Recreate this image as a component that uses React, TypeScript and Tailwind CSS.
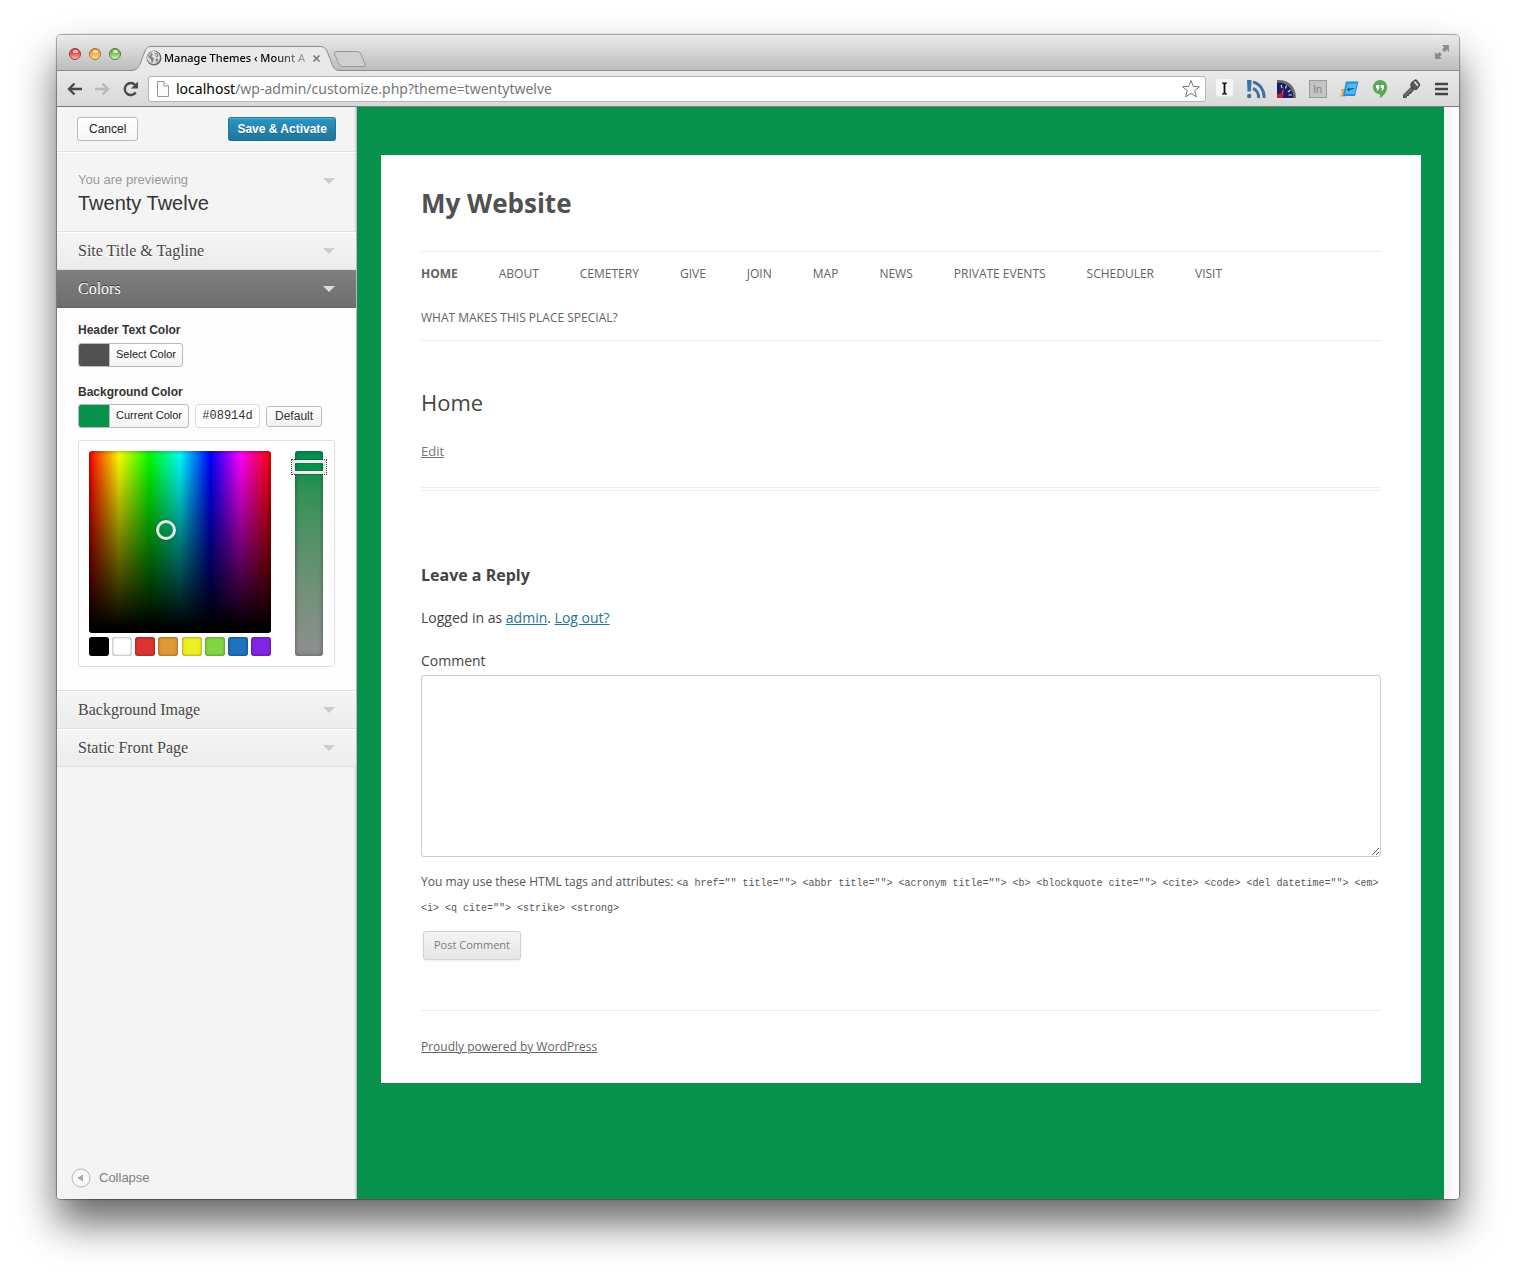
import { useState, type ReactNode } from 'react';

const NAV = ['About', 'Cemetery', 'Give', 'Join', 'Map', 'News', 'Private Events', 'Scheduler', 'Visit', 'What makes this place special?'];

const SWATCHES = [
  { name: 'Black', cls: 'bg-black' },
  { name: 'White', cls: 'bg-white' },
  { name: 'Red', cls: 'bg-[#dd3333]' },
  { name: 'Orange', cls: 'bg-[#dd9933]' },
  { name: 'Yellow', cls: 'bg-[#eeee22]' },
  { name: 'Green', cls: 'bg-[#81d742]' },
  { name: 'Blue', cls: 'bg-[#1e73be]' },
  { name: 'Purple', cls: 'bg-[#8224e3]' },
];

const TAGS =
  '<a href="" title=""> <abbr title=""> <acronym title=""> <b> <blockquote cite=""> <cite> <code> <del datetime=""> <em> <i> <q cite=""> <strike> <strong>';

function Arrow({ light = false }: { light?: boolean }) {
  return (
    <svg width="12" height="6" viewBox="0 0 12 6" aria-hidden="true" className={light ? 'fill-[#dddddd]' : 'fill-[#cccccc]'}>
      <path d="M0 0H12L6 6Z" />
    </svg>
  );
}

function Lights() {
  const lights = [
    { name: 'Close', cls: 'border-[#9c3a38] from-[#c8393b] via-[#ee5a58] to-[#ffb3ae]' },
    { name: 'Minimize', cls: 'border-[#a5702c] from-[#d98c2b] via-[#f6b342] to-[#ffe69b]' },
    { name: 'Zoom', cls: 'border-[#51803a] from-[#5da145] via-[#83c860] to-[#d5f7b4]' },
  ];
  return (
    <div className="flex gap-2 pt-[13px]">
      {lights.map((l) => (
        <button key={l.name} aria-label={l.name} className={`flex size-3 justify-center rounded-full border bg-linear-to-b ${l.cls}`}>
          <span className="mt-px h-[3px] w-[5px] rounded-full bg-white/70" />
        </button>
      ))}
    </div>
  );
}

function TabStrip() {
  return (
    <div className="flex h-9 shrink-0 items-start rounded-t-[4px] border-b border-[#8d8d8d] bg-linear-to-b from-[#ebebeb] to-[#bdbdbd] pl-3">
      <Lights />
      <div className="relative ml-[10px] mt-[10px] h-[26px] w-[208px]">
        <svg viewBox="0 0 208 26" width="208" height="26" className="absolute inset-0" aria-hidden="true">
          <path d="M0 26C6 25 7 23 9 19L14 6C16 2 17 1.500 20 1.500H189C193 1.500 194 3 196 6L201 19C203 24 204 25 208 26Z" fill="#e9e9e9" />
          <path d="M0 25.500C6 25 7 23 9 19L14 6C16 2 17 1.500 20 1.500H189C193 1.500 194 3 196 6L201 19C203 24 204 25 208 25.500" fill="none" stroke="#8d8d8d" />
        </svg>
        <div className="relative flex h-full items-center pl-[15px]">
          <svg width="16" height="16" viewBox="0 0 16 16" aria-hidden="true">
            <circle cx="8" cy="8" r="7.500" fill="#6b6b6b" />
            <circle cx="7.500" cy="7.500" r="6.500" fill="#dedede" />
            <path d="M2.500 4.500C4 2 6.500 2.500 6.500 4.500S5 6 6 7 8.500 8 7.500 10 7 13.500 6 13 5.500 9.500 4 8.500 2 6 2.500 4.500Z" fill="#858585" />
            <path d="M9 3C11.500 2.500 13 5 12 6.500S9.500 6.500 9.500 5.500 8 4 9 3ZM10 9C11.500 8 12.500 9 12 10.500S9.500 12 9.500 11 9.500 9.500 10 9Z" fill="#858585" />
            <path d="M3.500 5L5 4M9.500 4.500L11 5.500" stroke="#fff" />
          </svg>
          <span className="ml-[2px] w-[144px] whitespace-nowrap bg-linear-to-r from-black from-75% to-black/20 bg-clip-text font-['Noto_Sans',sans-serif] text-[11px] font-medium leading-4 text-transparent">
            Manage Themes ‹ Mount A
          </span>
          <button aria-label="Close tab" className="ml-1">
            <svg width="9" height="9" viewBox="0 0 9 9" aria-hidden="true">
              <path d="M1.500 1.500L7.500 7.500M7.500 1.500L1.500 7.500" stroke="#777" strokeWidth="1.600" />
            </svg>
          </button>
        </div>
      </div>
      <button aria-label="New tab" className="-ml-[6px] mt-[15px]">
        <svg width="34" height="18" viewBox="0 0 34 18" aria-hidden="true">
          <path d="M3 1.500H24Q27 1.500 28 4L32 14Q33 16.500 30 16.500H10Q7 16.500 6 14L1.500 4Q1 1.500 3 1.500Z" fill="#d0d0d0" stroke="#989898" />
        </svg>
      </button>
      <button aria-label="Full screen" className="ml-auto mr-[10px] mt-[10px]">
        <svg width="14" height="14" viewBox="0 0 14 14" aria-hidden="true" fill="#8b8b8b">
          <path d="M7 0H14V7L11.800 4.800L9.500 7.200L7 4.600L9.200 2.300Z" />
          <path d="M0 7V14H7L4.800 11.800L7 9.400L4.600 7L2.300 9.200Z" />
        </svg>
      </button>
    </div>
  );
}

function Extension({ label, children }: { label: string; children: ReactNode }) {
  return (
    <button aria-label={label} className="flex w-[31px] justify-center">
      {children}
    </button>
  );
}

function Extensions() {
  return (
    <div className="flex items-center pl-[3px]">
      <Extension label="Instapaper">
        <svg width="19" height="19" viewBox="0 0 19 19" aria-hidden="true">
          <rect x="0.500" y="0.500" width="18" height="18" rx="3" fill="#e4e4e4" />
          <rect x="1" y="0" width="17" height="17" rx="3" fill="#f6f6f6" />
          <path d="M7 3.500H12V4.500L10.400 5V14L12 14.500V15.500H7V14.500L8.600 14V5L7 4.500Z" fill="#111" />
        </svg>
      </Extension>
      <Extension label="Feed">
        <svg width="20" height="20" viewBox="0 0 20 20" aria-hidden="true" fill="none" stroke="#41719f">
          <path d="M1 1H5.500L5 12.500H1.500Z" fill="#41719f" stroke="none" />
          <circle cx="3.200" cy="17" r="2.200" fill="#41719f" stroke="none" />
          <path d="M7 9.500A9 9 0 0 1 12.500 19" strokeWidth="3" />
          <path d="M7 3A15 15 0 0 1 18 19" strokeWidth="3" />
        </svg>
      </Extension>
      <Extension label="Page speed">
        <svg width="20" height="20" viewBox="0 0 20 20" aria-hidden="true">
          <path d="M0 1C11 0 19 7 19 19H0Z" fill="#6f6f6f" />
          <path d="M0 3.500C10 3 16.500 10 16.500 19H0Z" fill="#1d1c66" />
          <path d="M4 6L5 9M9.500 6.500L8.500 9.500M13.500 11L11 13M15 16L11.500 16" stroke="#d4d4ee" strokeWidth="1.200" />
          <path d="M7 8L6 17L2 19Z" fill="#ed2f3f" />
          <path d="M0 15L6 14.500V19H0Z" fill="#b22235" />
        </svg>
      </Extension>
      <Extension label="LinkedIn">
        <span className="h-[18px] w-[18px] border border-[#9b9b9b] bg-[#c4c4c4] text-[11px] leading-4 text-[#858585]">In</span>
      </Extension>
      <Extension label="Window resizer">
        <svg width="20" height="18" viewBox="0 0 20 18" aria-hidden="true">
          <path d="M2 9H8L7 16.500H0.500L3 14Z" fill="#f1a33c" />
          <path d="M7 1.500H19.500L16 16H4Z" fill="#1f8fd8" />
          <path d="M8.500 3.500H18L15.500 14H6Z" fill="#4db9f5" />
          <path d="M8.500 9.500L15 8.500M10.500 8L8.500 9.500L10.500 11" stroke="#0a3760" fill="none" />
        </svg>
      </Extension>
      <Extension label="Hangouts">
        <svg width="18" height="20" viewBox="0 0 18 20" aria-hidden="true">
          <path d="M9 1A7.200 7.200 0 0 1 16.200 8.200C16.200 12.500 12.500 16.800 9.200 19V15.400A7.200 7.200 0 0 1 9 1Z" fill="#54aa53" />
          <path d="M5 6H8.300V9L7 11.500H5.700L6.500 9.300H5ZM9.700 6H13V9L11.700 11.500H10.400L11.200 9.300H9.700Z" fill="#fff" />
        </svg>
      </Extension>
      <Extension label="Passwords">
        <svg width="20" height="20" viewBox="0 0 20 20" aria-hidden="true">
          <path d="M10.500 3.500L14 1Q15 0.500 16 1.500L18.500 5Q19 6 18.300 7L16 10Q15 11 13.500 10.500L10.500 8.500Q9 6 10.500 3.500Z" fill="#5c5c5c" stroke="#3f3f3f" />
          <path d="M10.500 8L2.500 16V18.500H5L6 16.500H7.500L8 14.500H9.500L12.500 11Z" fill="#6a6a6a" stroke="#3f3f3f" />
          <path d="M14 3.200L16.500 6.200" stroke="#e6e6e6" strokeWidth="1.600" strokeLinecap="round" />
        </svg>
      </Extension>
      <Extension label="Menu">
        <svg width="13" height="14" viewBox="0 0 13 14" aria-hidden="true">
          <path d="M0 2H13M0 7H13M0 12H13" stroke="#444" strokeWidth="2.700" />
        </svg>
      </Extension>
    </div>
  );
}

function Toolbar() {
  return (
    <div className="flex h-9 shrink-0 items-center border-b border-[#7c7c7c] bg-linear-to-b from-[#e9e9e9] to-[#d9d9d9] pl-[10px] pr-[2px]">
      <div className="flex w-[81px] items-center gap-[13px]">
        <button aria-label="Back">
          <svg width="15" height="14" viewBox="0 0 15 14" aria-hidden="true" fill="none" stroke="#4a4a4a" strokeWidth="2.400">
            <path d="M15 7H2M7.500 1.500L2 7L7.500 12.500" />
          </svg>
        </button>
        <button aria-label="Forward">
          <svg width="15" height="14" viewBox="0 0 15 14" aria-hidden="true" fill="none" stroke="#b9b9b9" strokeWidth="2.400">
            <path d="M0 7H13M7.500 1.500L13 7L7.500 12.500" />
          </svg>
        </button>
        <button aria-label="Reload">
          <svg width="16" height="16" viewBox="0 0 16 16" aria-hidden="true">
            <path d="M12.700 11.500A6 6 0 1 1 12.200 4" fill="none" stroke="#4a4a4a" strokeWidth="2.400" />
            <path d="M15 0.500V7.500H8Z" fill="#4a4a4a" />
          </svg>
        </button>
      </div>
      <div className="flex h-[26px] flex-1 items-center rounded-[3px] border border-[#b4b4b4] bg-white">
        <svg width="12" height="16" viewBox="0 0 12 16" className="ml-2" aria-hidden="true" fill="#fbfbfb" stroke="#999">
          <path d="M0.500 0.500H7L11.500 5V15.500H0.500Z" />
          <path d="M7 0.500V5H11.500" />
        </svg>
        <div className="ml-[7px] flex-1 font-['Noto_Sans',sans-serif] text-[14px] leading-5 text-[#777777]">
          <span className="text-black">localhost</span>/wp-admin/customize.php?theme=twentytwelve
        </div>
        <button aria-label="Bookmark this page" className="mr-1">
          <svg width="20" height="20" viewBox="0 0 20 20" aria-hidden="true">
            <path d="M10 1.500L12.300 7.400L18.500 7.700L13.700 11.700L15.400 17.800L10 14.400L4.600 17.800L6.300 11.700L1.500 7.700L7.700 7.400Z" fill="#fff" stroke="#777" />
          </svg>
        </button>
      </div>
      <Extensions />
    </div>
  );
}

function Section({ title, open = false }: { title: string; open?: boolean }) {
  return (
    <h3>
      <button
        aria-expanded={open}
        className={
          open
            ? "flex h-[38px] w-full items-center justify-between border-b border-[#666666] bg-linear-to-b from-[#808080] to-[#6d6d6d] px-[21px] font-['Liberation_Serif',serif] text-[16px] text-white [text-shadow:0_-1px_0_#333]"
            : "flex h-[38px] w-full items-center justify-between border-b border-t border-b-[#dfdfdf] border-t-white bg-linear-to-b from-[#f5f5f5] to-[#ececec] px-[21px] font-['Liberation_Serif',serif] text-[16px] text-[#464646] [text-shadow:0_1px_0_#fff]"
        }
      >
        <span>{title}</span>
        <Arrow light={open} />
      </button>
    </h3>
  );
}

function ColorButton({ swatch, children }: { swatch: string; children: ReactNode }) {
  return (
    <button className="flex h-6 rounded-[3px] border border-[#bbbbbb] bg-linear-to-b from-white to-[#f3f3f3] text-[11px] leading-[21px] text-[#222222]">
      <span className={`h-full w-[30px] rounded-l-[2px] ${swatch}`} />
      <span className="h-full border-l border-[#bbbbbb] px-[6px]">{children}</span>
    </button>
  );
}

function ColorPicker() {
  return (
    <div className="mt-3 flex justify-between rounded-[3px] border border-[#dfdfdf] bg-white py-[10px] pl-[10px] pr-[11px]">
      <div>
        <div className="relative h-[182px] w-[182px] rounded-[3px] bg-[linear-gradient(to_bottom,transparent,#000_97%),linear-gradient(to_right,#f00,#ff0_16.67%,#0f0_33.33%,#0ff_50%,#00f_66.67%,#f0f_83.33%,#f00)] shadow-[inset_0_0_5px_rgba(0,0,0,0.4)]">
          <button aria-label="Hue and brightness" className="absolute left-[67px] top-[69px] size-5 rounded-full border-[3px] border-[#dfe8e2] shadow-[0_0_2px_rgba(0,0,0,0.5)]" />
        </div>
        <div className="mt-1 flex justify-between">
          {SWATCHES.map((s) => (
            <button key={s.name} aria-label={s.name} className={`h-[19px] w-[20px] rounded-[3px] shadow-[inset_0_0_3px_rgba(0,0,0,0.5)] ${s.cls}`} />
          ))}
        </div>
      </div>
      <div className="relative w-7 rounded-[3px] bg-linear-to-b from-[#06914c] from-8% to-[#8f8f8f] shadow-[inset_0_0_4px_rgba(0,0,0,0.4)]">
        <div className="absolute -left-1 top-2 h-4 w-9 border border-dotted border-[#33525f]">
          <div className="h-full w-full rounded-[4px] border-[3px] border-[#eeeeee] shadow-[inset_0_0_1px_rgba(0,0,0,0.8),0_0_1px_rgba(0,0,0,0.8)]" />
        </div>
        <input type="range" aria-label="Saturation" defaultValue={92} className="absolute inset-0 h-full w-full opacity-0 [direction:rtl] [writing-mode:vertical-lr]" />
      </div>
    </div>
  );
}

function Sidebar() {
  const [hex, setHex] = useState('#08914d');
  return (
    <aside className="flex w-[300px] shrink-0 flex-col border-r border-[#bcbcbc] bg-[#f4f4f4] text-[12px] shadow-[inset_-2px_0_2px_-1px_rgba(0,0,0,0.14)]">
      <div className="flex h-[45px] items-center justify-between border-b border-[#dfdfdf] px-5">
        <button className="h-6 rounded-[3px] border border-[#bbbbbb] bg-linear-to-b from-white to-[#f6f6f6] px-[11px] text-[#222222]">Cancel</button>
        <button className="h-6 rounded-[3px] border border-[#21759b] border-b-[#1e6a8d] bg-linear-to-b from-[#2a95c5] to-[#21759b] px-2 font-bold text-white shadow-[inset_0_1px_0_rgba(120,200,230,0.5)] [text-shadow:0_1px_0_rgba(0,0,0,0.2)]">
          Save &amp; Activate
        </button>
      </div>
      <button className="flex h-20 items-start justify-between border-b border-t border-b-[#dfdfdf] border-t-white px-[21px] pt-[18px] text-left">
        <span>
          <span className="block text-[13px] leading-[18px] text-[#999999]">You are previewing</span>
          <span className="block text-[20px] leading-7 text-[#333333]">Twenty Twelve</span>
        </span>
        <span className="pt-[7px]">
          <Arrow />
        </span>
      </button>
      <Section title="Site Title & Tagline" />
      <Section title="Colors" open />
      <div className="border-b border-[#dfdfdf] bg-[#fdfdfd] px-[21px] pb-[23px] pt-[14px] text-[#333333]">
        <div className="font-bold leading-4">Header Text Color</div>
        <div className="mt-[5px] flex">
          <ColorButton swatch="bg-[#515151]">Select Color</ColorButton>
        </div>
        <label htmlFor="bg-hex" className="mt-[17px] block font-bold leading-4">
          Background Color
        </label>
        <div className="mt-1 flex items-center">
          <ColorButton swatch="bg-[#08914d]">Current Color</ColorButton>
          <input
            id="bg-hex"
            value={hex}
            onChange={(e) => setHex(e.target.value)}
            className="ml-[6px] h-6 w-[65px] rounded-[3px] border border-[#dfdfdf] bg-white text-center font-['Liberation_Mono',monospace] text-[12px]"
          />
          <button className="ml-[6px] h-[21px] rounded-[3px] border border-[#bbbbbb] bg-linear-to-b from-white to-[#f1f1f1] px-2 text-[12px] leading-[19px]">Default</button>
        </div>
        <ColorPicker />
      </div>
      <Section title="Background Image" />
      <Section title="Static Front Page" />
      <button className="mt-auto flex items-center gap-2 pb-[11px] pl-[14px] text-[13px] text-[#808080]">
        <svg width="20" height="20" viewBox="0 0 20 20" aria-hidden="true">
          <circle cx="10" cy="10" r="9" fill="#f8f8f8" stroke="#b5b5b5" />
          <path d="M6 10L12 6.500V13.500Z" fill="#aaa" />
        </svg>
        Collapse
      </button>
    </aside>
  );
}

function Preview() {
  return (
    <main className="flex-1 bg-[#08914d] pl-6 pr-[23px] pt-12 font-['Open_Sans',sans-serif] text-[#444444]">
      <div className="bg-white px-10 pb-6">
        <h1 className="pt-[30px] text-[26px] font-bold leading-9 text-[#515151]">My Website</h1>
        <nav className="mt-[30px] border-b border-t border-[#ededed]">
          <ul className="flex flex-wrap gap-x-[41px] text-[12px] uppercase leading-[44px] text-[#636363]">
            <li>
              <a href="#home" className="font-bold">Home</a>
            </li>
            {NAV.map((n) => (
              <li key={n}>
                <a href="#page">{n}</a>
              </li>
            ))}
          </ul>
        </nav>
        <h2 className="mt-[46px] text-[22px] leading-[30px]">Home</h2>
        <div className="mt-[22px] text-[13px] leading-6">
          <a href="#edit" className="text-[#757575] underline">Edit</a>
        </div>
        <div className="mt-6 h-1 border-b border-t border-[#ededed]" />
        <h3 className="mt-[72px] text-[16px] font-bold leading-6">Leave a Reply</h3>
        <p className="mt-[19px] text-[14px] leading-6">
          Logged in as <a href="#admin" className="text-[#21759b] underline">admin</a>. <a href="#logout" className="text-[#21759b] underline">Log out?</a>
        </p>
        <label htmlFor="comment" className="mt-[19px] block text-[14px] leading-6">
          Comment
        </label>
        <textarea id="comment" className="mt-[2px] block h-[182px] w-full rounded-[3px] border border-[#cccccc] bg-white p-2" />
        <p className="mt-3 text-[12px] leading-[25px] text-[#555555]">
          You may use these HTML tags and attributes: <code className="font-['Liberation_Mono',monospace] text-[10px] leading-none">{TAGS}</code>
        </p>
        <button className="ml-[2px] mt-3 h-[29px] rounded-[3px] border border-[#d2d2d2] bg-linear-to-b from-[#f4f4f4] to-[#e6e6e6] px-[10px] text-[11px] text-[#7c7c7c] shadow-[0_1px_2px_rgba(64,64,64,0.1)]">
          Post Comment
        </button>
        <footer className="mt-[50px] border-t border-[#ededed] pt-6 text-[12px] leading-6">
          <a href="#wordpress" className="text-[#636363] underline">Proudly powered by WordPress</a>
        </footer>
      </div>
    </main>
  );
}

export default function App() {
  return (
    <div className="flex min-h-screen flex-col bg-white px-[57px] pb-[79px] pt-[35px] font-['Liberation_Sans',sans-serif]">
      <div className="flex flex-1 flex-col rounded-[4px] shadow-[0_0_1px_1px_rgba(0,0,0,0.35),0_24px_40px_rgba(0,0,0,0.6)]">
        <TabStrip />
        <Toolbar />
        <div className="flex flex-1 overflow-hidden rounded-b-[4px] bg-[#f8f8f8]">
          <Sidebar />
          <Preview />
          <div className="w-[15px] shrink-0 bg-linear-to-r from-[#f2f2f2] to-white" />
        </div>
      </div>
    </div>
  );
}
